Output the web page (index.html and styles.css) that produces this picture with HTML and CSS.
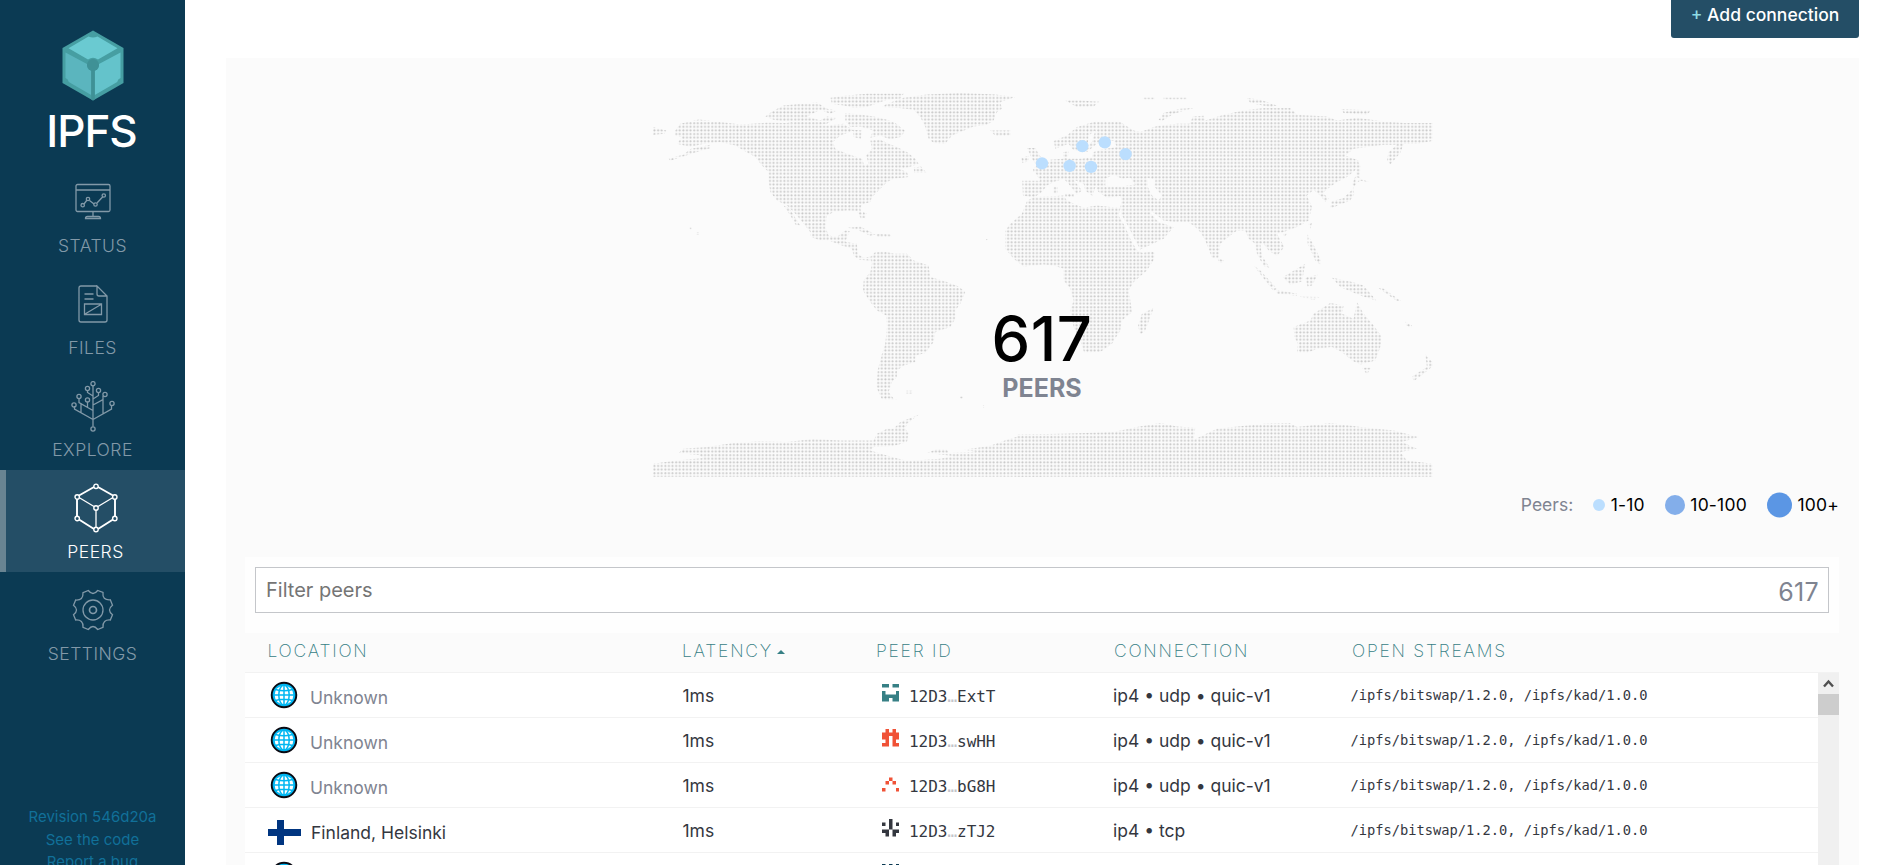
FILE: index.html
```
<!DOCTYPE html>
<html lang="en">
<head>
<meta charset="utf-8">
<title>Peers | IPFS</title>
<link rel="stylesheet" href="styles.css">
</head>
<body>
<svg class="defs" aria-hidden="true">
  <symbol id="globe" viewBox="0 0 28 28">
    <circle cx="14" cy="14" r="12.3" fill="#00b7f2" stroke="#0a0a12" stroke-width="1.9"/>
    <circle cx="14" cy="14" r="9.4" fill="#fff"/>
    <g fill="none" stroke="#00b7f2" stroke-width="1.5"><ellipse cx="14" cy="14" rx="5.2" ry="10"/><path d="M14 3v22M3 14h22M5.5 8.5q8.500 2.500 17 0M5.500 19.500q8.500-2.500 17 0"/></g>
  </symbol>
</svg>
<div class="app">
  <nav class="sidebar">
    <div class="brand">
      <svg width="62" height="71" viewBox="0 0 62 71">
        <path fill="#469ea2" d="M31 0.500 61.500 18v35L31 70.500.500 53V18z"/>
        <path fill="#6acad1" d="M6.500 18.200 26.500 6.500q4.500 2 9 0l20 11.700L36 29.500q-5-3.500-10 0z"/>
        <path fill="#5bb5be" d="M3.500 22.500 25 34q-.5 5 4.200 6.800V65L6.800 52q-.5-3-3.300-4z"/>
        <path fill="#64c3cb" d="M58.500 22.500 37 34q.5 5-4.200 6.800V65l22.400-13q.5-3 3.300-4z"/>
        <path fill="#3f9196" d="M29.200 40h3.600v29.500L31 70.500l-1.800-1z"/><circle cx="31" cy="35" r="6" fill="#3f9196"/>
      </svg>
      <div class="brand-name">IPFS</div>
    </div>
    <a class="nav-item">
      <svg width="36" height="38" viewBox="0 0 36 38"><g fill="none" stroke="currentColor" stroke-width="1.3"><rect x="1" y="1.500" width="34" height="27" rx="1.500"/><path d="M1 7h34M18 28.500v5M10.500 35.500q0-2 2-2h11q2 0 2 2z"/><path d="m9 21 3-4m2.500.500 4.500 3.500m3-1 6-6.500"/><circle cx="7.700" cy="22.200" r="1.700"/><circle cx="13" cy="16" r="1.700"/><circle cx="20.500" cy="21.500" r="1.700"/><circle cx="28.800" cy="12.500" r="1.700"/></g></svg>
      <span>STATUS</span>
    </a>
    <a class="nav-item">
      <svg width="30" height="38" viewBox="0 0 30 38"><g fill="none" stroke="currentColor" stroke-width="1.300"><path d="M19 1H3Q1 1 1 3v32q0 2 2 2h24q2 0 2-2V11L19 1V9q0 2 2 2h8M6.500 9h9M6.500 14h9M6.500 19h17v10.500h-17zM7 29 23 19.500"/></g></svg>
      <span>FILES</span>
    </a>
    <a class="nav-item">
      <svg width="44" height="51" viewBox="0 0 44 51"><g fill="none" stroke="currentColor" stroke-width="1.300"><path d="M22 4.500v41M22 38.500 3.500 28v-3M22 38.500 40.500 28v-4M22 29.500 8 21.500v-4M10 22v9.500M16.500 26.500v-6M22 24l10-5.500v-3.500M32 19v14M22 18l5.500-3.500v-3M22 15l-5.500-3.500V9.500"/><circle cx="22" cy="2.700" r="2.100"/><circle cx="16.500" cy="7.500" r="2.100"/><circle cx="27.500" cy="9.500" r="2.100"/><circle cx="8" cy="15.500" r="2.100"/><circle cx="34" cy="13.500" r="2.100"/><circle cx="16.500" cy="19" r="2.100"/><circle cx="3" cy="24" r="2.100"/><circle cx="41" cy="22.500" r="2.100"/><circle cx="22" cy="48" r="2.100"/></g></svg>
      <span>EXPLORE</span>
    </a>
    <a class="nav-item active">
      <svg width="44" height="50" viewBox="0 0 44 50"><g fill="none" stroke="currentColor"><path stroke-width="1.900" d="M20 4 5 12.500M24 4l15 8.500M3 16v17M41 16v17M5 36.500 20 46M39 36.500 24 46"/><path stroke-width="1.300" d="M5 14.500 20 23.500M39 14.500 24 23.500M22 27v18"/><g stroke-width="1.400"><circle cx="22" cy="3.300" r="2.200"/><circle cx="3.200" cy="14" r="2.200"/><circle cx="40.800" cy="14" r="2.200"/><circle cx="22" cy="25" r="2.200"/><circle cx="3.200" cy="35.500" r="2.200"/><circle cx="40.800" cy="35.500" r="2.200"/><circle cx="22" cy="46.500" r="2.200"/></g></g></svg>
      <span>PEERS</span>
    </a>
    <a class="nav-item">
      <svg width="42" height="42" viewBox="0 0 42 42"><g fill="none" stroke="currentColor" stroke-width="1.300"><path d="M16.300 1.500 Q21 7.500 25.700 1.500 L31 3.500 Q30 11.500 38.300 10.800 L40.500 16.300 Q34.500 21 40.500 25.700 L38.300 31 Q30.500 30.500 31 38.300 L25.700 40.500 Q21 34.500 16.300 40.500 L11 38.300 Q11.500 30.500 3.700 31 L1.500 25.700 Q7.500 21 1.500 16.300 L3.700 11 Q11.500 11.500 11 3.700Z"/><circle cx="21" cy="21" r="10"/><circle cx="21" cy="21" r="3.500" stroke-width="1.700"/></g></svg>
      <span>SETTINGS</span>
    </a>
    <div class="links"><a>Revision 546d20a</a><a>See the code</a><a>Report a bug</a></div>
  </nav>

  <main class="main">
    <div class="toolbar"><button class="add"><i>+</i> Add connection</button></div>
    <section class="panel">
      <div class="map">
        <svg width="780" height="384" viewBox="652.700 92.600 780 384">
          <defs>
            <pattern id="dots" x="652.900" y="92.700" width="3.608" height="3.608" patternUnits="userSpaceOnUse"><circle cx="1.300" cy="1.300" r="1.040" fill="#c8c8c8"/></pattern>
            <mask id="land" maskUnits="userSpaceOnUse" x="650" y="90" width="790" height="390">
              <g transform="translate(640 80) scale(.33333)" fill="#fff">
                <path d="M105 150 120 130 175 117 240 125 300 132 380 127 440 128 500 132 560 135 610 130 640 150 600 165 578 185 585 205 620 220 665 235 672 255 685 250 678 225 695 205 690 180 720 178 745 190 770 200 800 215 825 235 835 250 800 262 775 265 800 275 805 290 760 295 740 305 715 330 695 350 690 365 665 372 660 385 670 412 662 415 650 392 620 390 580 395 560 405 555 440 565 465 590 470 615 450 628 452 615 485 650 490 652 520 670 533 690 528 690 540 655 538 640 525 635 505 600 494 570 482 540 480 512 470 510 455 490 430 465 400 440 375 410 360 390 335 385 300 385 275 365 255 345 230 310 210 285 195 240 185 190 190 150 200 110 190 125 170 105 165Z"/>
                <path d="M430 375 447 383 465 412 480 435 466 433 450 405ZM85 235 130 222 150 206 210 193 212 203 160 218 90 241ZM38 140 78 150 72 160 38 164Z"/>
                <path d="M375 108 400 90 430 75 480 70 530 66 560 85 590 90 570 100 540 88 500 108 540 120 560 108 590 112 560 130 520 137 480 137 440 125 400 118ZM570 52 620 45 680 40 790 40 780 55 740 58 700 72 680 80 640 82 610 75 575 70ZM615 98 660 102 700 108 740 118 765 128 795 152 780 170 750 177 720 165 690 172 698 150 660 138 630 140 615 120ZM638 148 665 150 662 175 640 170Z"/>
                <path d="M820 262 842 258 858 276 822 276ZM622 442 660 438 705 462 690 466 650 447ZM706 460 750 462 754 470 708 470ZM668 395 678 398 676 415 668 412Z"/>
                <path d="M690 530 705 515 735 513 760 520 800 520 820 540 865 555 870 590 920 605 955 618 975 635 960 670 945 690 945 715 930 740 885 755 880 785 855 818 825 825 825 845 790 855 770 870 770 890 755 905 745 935 760 955 778 958 725 957 708 920 712 870 725 820 735 790 740 740 738 705 710 690 690 665 668 630 670 600 690 575 695 550ZM798 931h20v8h-20z"/>
                <path d="M740 70 790 52 860 42 960 38 1065 42 1125 50 1080 65 1085 85 1070 95 1060 120 1040 133 1000 138 960 155 935 165 915 190 880 188 865 175 855 140 840 110 820 88 770 82 725 80ZM1050 150 1110 150 1110 165 1065 167ZM1160 203 1185 203 1198 225 1215 245 1215 262 1180 275 1178 265 1190 255 1175 235ZM1143 232 1166 226 1164 243 1146 247Z"/>
                <path d="M148 442h6v6h-6zM168 455h8v7h-8zM1037 476h6v6h-6zM960 948h8v7h-8zM1028 974h6v7h-6z"/>
                <path d="M38 1189V1150L110 1140 190 1133 175 1124 115 1118 130 1105 200 1100 280 1088 350 1083 440 1085 520 1076 600 1080 700 1080 710 1060 740 1045 760 1045 780 1025 835 1003 800 1030 795 1045 805 1060 800 1085 760 1097 700 1100 690 1110 740 1125 800 1142 900 1135 940 1127 860 1118 890 1106 920 1108 925 1118 1010 1115 970 1108 1050 1096 1100 1078 1150 1063 1205 1062V1189Z"/>
              </g>
              <g transform="translate(1030 80) scale(.33333)" fill="#fff">
                <path d="M-25 400-60 430-75 450-75 505-50 535-20 558 40 552 75 557 100 565 100 600 120 625 130 660 120 690 130 740 150 780 162 818 210 815 245 790 270 750 275 720 305 695 300 660 295 630 310 605 350 570 372 535 372 513 335 517 320 510 300 475 285 440 265 405 270 383 240 380 200 375 160 382 130 370 108 358 100 345 60 348 10 350-10 362Z"/>
                <path d="M-24 301H30L10 268 40 262 60 238 100 235 98 215 115 213 112 235 150 235 185 230 190 215 210 208 260 200 250 180 200 190 170 215 130 210 115 190 75 205 70 182 110 165 140 140 200 122 265 122 310 150 330 155 380 137 440 130 478 130 488 108 520 106 525 120 580 103 640 90 700 83 780 83 800 103 890 108 920 120 980 112 1060 123 1120 128 1206 128V182L1160 190 1120 190 1110 218 1080 252 1070 240 1075 215 1100 193 1060 193 970 205 945 225 985 240 980 265 950 290 920 305 888 328 878 338 895 355 885 364 870 345 850 328 830 345 845 380 835 420 800 440 760 455 740 460 762 500 740 527 715 510 700 490 690 490 695 525 718 562 700 557 680 520 675 490 655 475 645 450 620 450 600 465 570 490 565 532 545 532 525 480 510 455 490 435 470 425 430 425 400 420 365 393 360 398 385 425 400 430 430 440 400 475 330 507 315 480 295 440 275 405 270 380 275 360 270 347 230 352 205 335 195 320 187 347 165 330 160 310 130 298 155 330 140 342 115 310 100 295 70 305 50 315 35 335 10 352-22 345Z"/>
                <path d="M105 60 150 60 207 64 190 78 140 80ZM338 52h35v6h-35zM400 52h70v6h-70zM385 118 400 98 450 85 490 83 430 100 395 122ZM650 53 690 58 740 75 720 80 660 68ZM932 86 1022 90 1010 103 940 98ZM978 235 990 255 988 305 978 305ZM1015 305 975 288 966 310 972 340 960 360 900 384 903 363 940 353 963 330 985 300Z"/>
                <path d="M832 462 848 490 872 540 870 552 855 540 832 490ZM670 555 690 570 740 625 730 632 705 600ZM738 628 800 640 800 646 740 640ZM758 590 800 565 825 550 815 603 780 613ZM825 592 862 583 845 615 832 618ZM905 592 960 603 1000 615 1038 660 990 645 930 620ZM1040 620 1060 625 1112 662 1100 662ZM808 649 870 650 850 658ZM758 458 772 458 762 470ZM835 430 845 428 840 445Z"/>
                <path d="M790 740 840 720 850 700 900 668 940 675 935 700 970 715 980 665 1000 700 1030 735 1055 770 1050 800 1035 840 990 852 965 840 935 815 905 800 860 805 830 818 800 818 803 790 792 770ZM996 862 1022 862 1010 882ZM1185 822 1206 845V858L1165 892 1150 902 1146 888 1190 860ZM370 683 345 750 330 762 323 735 335 700 355 690ZM562 532 580 540 578 548 565 546ZM70 318h12v22h-12zM105 340h25v10h-25zM1125 724 1145 735 1142 742 1128 735Z"/>
                <path d="M-40 1062 100 1060 250 1055 320 1040 390 1028 440 1038 495 1042 490 1078 560 1045 700 1030 780 1028 800 1040 900 1028 990 1040 1090 1050 1165 1070 1115 1085 1160 1105 1110 1115 1130 1140 1206 1150V1189H-40Z"/>
                <path fill="#000" d="M225 295 250 282 275 295 300 292 315 312 280 317 225 318ZM350 292 375 298 372 318 395 345 385 360 365 345 352 318ZM175 165 195 150 185 185 172 195Z"/>
              </g>
            </mask>
          </defs>
          <rect x="652" y="92" width="782" height="386" fill="url(#dots)" mask="url(#land)"/>
          <g fill="#bbdefe"><circle cx="1041.700" cy="163" r="6.200"/><circle cx="1069.300" cy="165.500" r="6.200"/><circle cx="1082" cy="145.700" r="6.200"/><circle cx="1090.700" cy="166.500" r="6.200"/><circle cx="1104.500" cy="142" r="6.200"/><circle cx="1125.300" cy="153.700" r="6.200"/></g>
        </svg>
        <div class="total"><strong>617</strong><span>PEERS</span></div>
      </div>
      <div class="legend"><span class="legend-title">Peers:</span><i class="s"></i><span>1-10</span><i class="m"></i><span>10-100</span><i class="l"></i><span>100+</span></div>

      <div class="peers">
        <div class="filter"><div class="field"><span class="ph">Filter peers</span><span class="n">617</span></div></div>
        <div class="row head"><span>LOCATION</span><span>LATENCY<b class="sort"></b></span><span>PEER ID</span><span>CONNECTION</span><span>OPEN STREAMS</span></div>
        <div class="list">
          <div class="rows">
            <div class="row"><span class="loc unknown"><svg class="globe"><use href="#globe"/></svg>Unknown</span><span>1ms</span><span class="pid"><svg viewBox="0 0 5 5" fill="#378085"><path d="M0 0h2v1H0zM3 0h2v1H3zM0 2h1v1h3V2h1v3H3V4H2v1H0z"/></svg><code>12D3<em>…</em>ExtT</code></span><span>ip4 • udp • quic-v1</span><code class="streams">/ipfs/bitswap/1.2.0, /ipfs/kad/1.0.0</code></div>
            <div class="row"><span class="loc unknown"><svg class="globe"><use href="#globe"/></svg>Unknown</span><span>1ms</span><span class="pid"><svg viewBox="0 0 5 5" fill="#f05237"><path d="M1 0h1v1h1V0h1v1h1v2H4v1h1v1H3V2H2v3H0V4h1V3H0V1h1z"/></svg><code>12D3<em>…</em>swHH</code></span><span>ip4 • udp • quic-v1</span><code class="streams">/ipfs/bitswap/1.2.0, /ipfs/kad/1.0.0</code></div>
            <div class="row"><span class="loc unknown"><svg class="globe"><use href="#globe"/></svg>Unknown</span><span>1ms</span><span class="pid"><svg viewBox="0 0 5 5" fill="#f05237"><path d="M2 1h1v1H2zM1 2h1v1H1zM3 2h1v1H3zM0 4h1v1H0zM4 4h1v1H4z"/></svg><code>12D3<em>…</em>bG8H</code></span><span>ip4 • udp • quic-v1</span><code class="streams">/ipfs/bitswap/1.2.0, /ipfs/kad/1.0.0</code></div>
            <div class="row"><span class="loc"><svg class="flag" viewBox="0 0 33 25"><path fill="#fff" d="M0 0h33v25H0z"/><path fill="#003580" d="M9 0h7v25H9zM0 9h33v7H0z"/></svg>Finland, Helsinki</span><span>1ms</span><span class="pid"><svg viewBox="0 0 5 5" fill="#34373f"><path d="M2 0h1v3H2zM0 1h1v1H0zM4 1h1v1H4zM0 3h2v2H1V4H0zM3 3h2v1H4v1H3z"/></svg><code>12D3<em>…</em>zTJ2</code></span><span>ip4 • tcp</span><code class="streams">/ipfs/bitswap/1.2.0, /ipfs/kad/1.0.0</code></div>
            <div class="row"><span class="loc"><svg class="globe"><use href="#globe"/></svg></span><span></span><span class="pid"><svg viewBox="0 0 5 5" fill="#0b3a53"><path d="M0 0h1v1H0zM2 0h1v1H2zM4 0h1v1H4zM0 2h5v1H0z"/></svg></span></div>
          </div>
          <div class="scrollbar"><div class="up"><svg width="11" height="9" viewBox="0 0 11 9"><path d="M1 7.500 5.500 2.500 10 7.500" fill="none" stroke="#505050" stroke-width="2.400"/></svg></div><div class="thumb"></div></div>
        </div>
      </div>
    </section>
  </main>
</div>
</body>
</html>
```

FILE: styles.css
```
* { box-sizing: border-box; }
html, body { margin: 0; height: 865px; overflow: hidden; }
body { font-family: Inter, "Liberation Sans", sans-serif; font-size: 17.5px; color: #34373f; background: #fff; }
.defs { position: absolute; width: 0; height: 0; }
.app { display: flex; height: 865px; overflow: hidden; }

.sidebar { width: 185px; flex: none; background: #0b3a53; display: flex; flex-direction: column; overflow: hidden; }
.brand { height: 164px; flex: none; padding-top: 30px; display: flex; flex-direction: column; align-items: center; }
.brand svg { display: block; }
.brand-name { color: #fff; font-weight: 500; font-size: 44px; line-height: 44px; margin: 8px 2px 0 0; letter-spacing: -1px; }
.nav-item { height: 102px; flex: none; padding-top: 4px; display: flex; flex-direction: column; align-items: center; color: #8299a8; font-weight: 300; }
.nav-item svg { display: block; margin: auto 0; }
.nav-item span { line-height: 20px; margin-bottom: 10px; flex: none; font-size: 17.5px; letter-spacing: .5px; }
.nav-item.active { background: #244e66; border-left: 6px solid #698492; color: #fff; }
.links { margin-top: auto; margin-bottom: -9px; flex: none; display: flex; flex-direction: column; align-items: center; font-size: 15px; line-height: 22.700px; color: #117099; }

.main { flex: 1; padding: 0 36px 0 41px; min-width: 0; }
.toolbar { height: 58px; display: flex; justify-content: flex-end; align-items: flex-start; }
.add { font: 500 17.500px/22px Inter, sans-serif; width: 188px; height: 50px; margin-top: -12px; padding: 3px 0 0; text-align: center; border: 0; border-radius: 3px; background: #244e66; color: #fff; white-space: nowrap; }
.add i { font-style: normal; color: #8ddbe3; }
.panel { background: #fbfbfb; height: 807px; padding: 35px 20px 0 19px; overflow: hidden; }
.map { position: relative; display: flex; justify-content: center; height: 386px; padding-left: 1px; }
.total { position: absolute; left: 0; right: 0; top: 215px; display: flex; flex-direction: column; align-items: center; }
.total strong { font-weight: 500; font-size: 61.500px; line-height: 62px; letter-spacing: .5px; color: #000; }
.total span { font-weight: 700; font-size: 25px; line-height: 30px; color: #7f8491; margin-top: 3px; }
.legend { height: 78px; padding-top: 16px; display: flex; justify-content: flex-end; align-items: flex-start; line-height: 20px; color: #000; }
.legend i { border-radius: 50%; margin: 9.500px 5.500px 0 0; transform: translateY(-50%); }
.legend span { margin-right: 20px; }
.legend span:last-child { margin-right: 0; letter-spacing: .2px; }
.legend .legend-title { color: #7f8491; }
.s { width: 12px; height: 12px; background: #bbdefe; }
.m { width: 20px; height: 20px; background: #83aeea; }
.l { width: 25px; height: 25px; background: #5b96e4; }
.legend span:nth-child(3), .legend span:nth-child(5) { letter-spacing: .2px; }

.filter { background: #fefefe; height: 76px; padding: 10px; }
.field { height: 46px; border: 1px solid #c4c6ca; background: #fff; display: flex; align-items: center; justify-content: space-between; padding: 0 9px 0 10px; }
.ph { font-size: 20px; color: #757575; }
.n { font-size: 25px; letter-spacing: .3px; color: #7f8491; padding-top: 4px; }
.row { display: grid; grid-template-columns: 413.500px 194px 236.500px 237.500px 1fr; align-items: center; height: 45px; padding-left: 24px; border-bottom: 1px solid #f2f2f2; white-space: nowrap; }
.row.head { height: 40px; padding-left: 22.500px; grid-template-columns: 414.500px 194px 238px 238px 1fr; color: #378085; font-weight: 200; letter-spacing: 1.750px; padding-bottom: 5px; }
.sort { display: inline-block; border: 4px solid transparent; border-top: 0; border-bottom-color: #378085; margin-left: 4px; vertical-align: 3px; }
.list { display: flex; background: #fff; }
.rows { flex: 1; }
.loc { display: flex; align-items: center; padding-top: 4px; }
.unknown { color: #7f8491; }
.globe { width: 28px; height: 28px; margin: -5px 12px 0 1px; }
.flag { width: 33px; height: 25px; margin: 0 10px 0 -1px; }
.pid { display: flex; align-items: center; padding-left: 6px; }
.pid svg { width: 17.500px; height: 17.500px; margin: -4px 10px 0 -1px; }
code { font: 16px "DejaVu Sans Mono", monospace; letter-spacing: -.030px; padding-top: 2px; }
code em { font-style: normal; color: #c3c5ca; }
code.streams { font-size: 13.750px; padding: 0; }
.scrollbar { width: 21px; background: #f0f0f0; }
.up { height: 21px; display: flex; align-items: center; justify-content: center; }
.thumb { height: 21px; background: #cdcdcd; }
```
